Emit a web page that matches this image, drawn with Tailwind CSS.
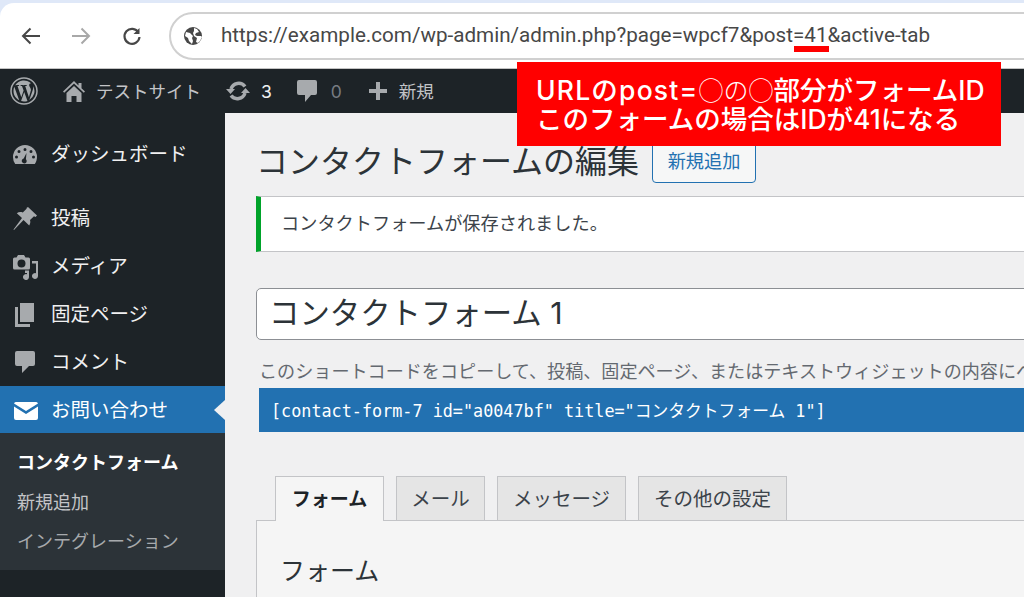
<!DOCTYPE html>
<html lang="ja">
<head>
<meta charset="UTF-8">
<title>コンタクトフォームの編集</title>
<script src="https://cdn.jsdelivr.net/npm/@tailwindcss/browser@4"></script>
</head>
<body class="font-['Inter','Noto_Sans_CJK_JP',sans-serif] bg-[#f0f0f1]">
<div class="relative w-[1024px] h-[597px] overflow-hidden flex flex-col">

    <!-- browser toolbar -->
    <div class="h-[69px] shrink-0 bg-[#dfe8f8] pt-[3px]">
        <div class="h-[66px] bg-white rounded-tl-[14px] border-b border-[#c4c4c4] flex items-center pl-[20px]">
            <svg class="w-[22px] h-[22px] shrink-0 text-[#474747]" viewBox="0 0 22 22" fill="none" stroke="currentColor" stroke-width="2"><path d="M20 11H3.500M10.500 3.500L3 11l7.500 7.500"/></svg>
            <svg class="w-[22px] h-[22px] shrink-0 ml-[28px] text-[#a8a8a8]" viewBox="0 0 22 22" fill="none" stroke="currentColor" stroke-width="2"><path d="M2 11h16.500M11.500 3.500L19 11l-7.500 7.500"/></svg>
            <svg class="w-[22px] h-[22px] shrink-0 ml-[29px] text-[#474747]" viewBox="0 0 22 22" fill="none" stroke="currentColor" stroke-width="2.200"><path d="M17.500 7.500A7.500 7.500 0 1 0 18.500 12"/><path d="M18.500 3v6h-6" fill="currentColor" stroke="none"/></svg>
            <div class="ml-[26px] w-[900px] h-[48px] shrink-0 rounded-l-[24px] border-2 border-[#d0d0d0] bg-white flex items-center pl-[12px]">
                <svg class="w-[20px] h-[20px] text-[#474747] shrink-0" viewBox="0 0 20 20"><circle cx="10" cy="10" r="9" fill="currentColor"/><path d="M3 6l4 1 3 3-1 2 1 3-1 3-3-3-1-3-3-2zM11 2l3 1 2 3-3 1-1 2 2 1h4l1 1-2 4-2 2-2-1 1-4-3-2-1-3 1-2z" fill="#fff"/></svg>
                <span class="ml-[18px] text-[20.630px] text-[#474747] font-['Roboto',sans-serif] whitespace-nowrap">https://example.com/wp-admin/admin.php?page=wpcf7&amp;post=41&amp;active-tab</span>
            </div>
        </div>
    </div>

    <!-- admin bar -->
    <div class="h-[44px] shrink-0 bg-[#1d2327] flex items-center text-[#c3c4c7] text-[17.500px]">
        <svg class="ml-[10px] w-[28px] h-[28px] shrink-0 text-[#a7aaad]" viewBox="0 0 28 28"><circle cx="14" cy="14" r="13" fill="none" stroke="currentColor" stroke-width="1.500"/><path fill="currentColor" d="M3.500 14c0 4 2.300 7.500 5.700 9.200L4.300 9.700A10.400 10.400 0 0 0 3.500 14zM21 13.500c0-1.300-.5-2.200-.9-2.900-.5-.9-1-1.600-1-2.500 0-1 .8-1.900 1.900-1.900h.1A10.500 10.500 0 0 0 5.200 8.200h.7c1.100 0 2.800-.1 2.800-.1.600 0 .6.800 0 .9 0 0-.6.100-1.200.1l3.800 11.200 2.300-6.800-1.600-4.400c-.6 0-1.100-.1-1.100-.1-.6 0-.5-.9 0-.9 0 0 1.700.1 2.700.1s2.800-.1 2.800-.1c.6 0 .6.800 0 .9 0 0-.6.100-1.200.1l3.700 11.100 1-3.400c.5-1.300.8-2.300.8-3.100zM14.200 15l-3.100 9.100a10.500 10.500 0 0 0 6.400-.2l-.1-.1zM23.200 9c0 .3.100.7.100 1.100 0 1-.2 2.200-.8 3.700l-3.200 9.200A10.500 10.500 0 0 0 23.200 9z"/></svg>
        <svg class="ml-[25px] w-[22px] h-[22px] shrink-0 text-[#a7aaad]" viewBox="0 0 22 22"><path fill="currentColor" d="M11 1L0 11.500l1.200 1.300L11 3.500l9.800 9.300 1.200-1.300-3.500-3.300V3h-3v2.500zM3.500 13L11 6l7.500 7v9h-5v-6h-5v6h-5z"/></svg>
        <span class="ml-[11px] mt-[2px] whitespace-nowrap">テストサイト</span>
        <svg class="ml-[25px] w-[24px] h-[24px] shrink-0 text-[#a7aaad]" viewBox="0 0 24 24" fill="none" stroke="currentColor" stroke-width="3.500"><path d="M5 10a8 8 0 0 1 14-2.500M19 14a8 8 0 0 1-14 2.500"/><path fill="currentColor" stroke="none" d="M0 10h9l-4.500 5zM24 14h-9l4.500-5z"/></svg>
        <span class="ml-[11px] mt-[2px] text-[#f0f0f1]">3</span>
        <svg class="ml-[25px] w-[20px] h-[24px] shrink-0 text-[#a7aaad]" viewBox="0 0 20 24"><path fill="currentColor" d="M2 1h16a2 2 0 0 1 2 2v11a2 2 0 0 1-2 2h-4l-6 7v-7H2a2 2 0 0 1-2-2V3a2 2 0 0 1 2-2z"/></svg>
        <span class="ml-[14px] mt-[2px] text-[#787c82]">0</span>
        <svg class="ml-[27px] w-[18px] h-[18px] shrink-0 text-[#a7aaad]" viewBox="0 0 18 18"><path fill="currentColor" d="M7 0h4v7h7v4h-7v7H7v-7H0V7h7z"/></svg>
        <span class="ml-[12px] mt-[2px] whitespace-nowrap">新規</span>
    </div>

    <div class="flex flex-1 min-h-0">
        <!-- sidebar -->
        <div class="w-[225px] shrink-0 bg-[#1d2327] pt-[18px] text-[#f0f0f1] text-[19.500px]">
            <div class="h-[48px] flex items-center pl-[13px]">
                <svg class="w-[24px] h-[20px] shrink-0 text-[#a7aaad]" viewBox="0 0 24 20"><path fill="currentColor" fill-rule="evenodd" d="M12 0a12 12 0 0 1 12 12c0 2.500-.8 5-2.200 7H2.200A12 12 0 0 1 0 12 12 12 0 0 1 12 0zM12 3a1.500 1.500 0 1 0 0 3 1.500 1.500 0 0 0 0-3zM6 5a1.500 1.500 0 1 0 0 3 1.500 1.500 0 0 0 0-3zM18 5a1.500 1.500 0 1 0 0 3 1.500 1.500 0 0 0 0-3zM3.500 10.500a1.500 1.500 0 1 0 0 3 1.500 1.500 0 0 0 0-3zM20.500 10.500a1.500 1.500 0 1 0 0 3 1.500 1.500 0 0 0 0-3zM13.500 8l-2.800 5.500a2.500 2.500 0 1 0 2.600 3.900c.6-1 .5-2.300-.4-3.200z"/></svg>
                <span class="ml-[14px] whitespace-nowrap">ダッシュボード</span>
            </div>
            <div class="h-[48px] mt-[16px] flex items-center pl-[13px]">
                <svg class="w-[24px] h-[24px] shrink-0 text-[#a7aaad]" viewBox="0 0 24 24"><path fill="currentColor" d="M15 0l9 8.500-1.500 1.500-1.500-.7-4 3.700c.7 2.200.2 4-.8 5.500L10.500 13 1 23l-.5-.5L9 11 3.800 6.200C5.500 5 7.500 4.600 9.800 5.500l4-4-.4-.5z"/></svg>
                <span class="ml-[14px] whitespace-nowrap">投稿</span>
            </div>
            <div class="h-[48px] flex items-center pl-[13px]">
                <svg class="w-[25px] h-[25px] shrink-0 text-[#a7aaad]" viewBox="0 0 25 25"><path fill="currentColor" fill-rule="evenodd" d="M5 0h6l1.500 2.500h3A1.500 1.500 0 0 1 17 4v9a1.500 1.500 0 0 1-1.500 1.500h-14A1.500 1.500 0 0 1 0 13V4a1.500 1.500 0 0 1 1.500-1.500h2zM8.500 4.500a4 4 0 1 0 0 8 4 4 0 0 0 0-8zM19 6h6v15a3 3 0 1 1-2-2.800V8.500h-4zM12 15.500h4V22a3 3 0 1 1-2-2.800v-1.200h-2z"/></svg>
                <span class="ml-[13px] whitespace-nowrap">メディア</span>
            </div>
            <div class="h-[48px] flex items-center pl-[15px]">
                <svg class="w-[20px] h-[24px] shrink-0 text-[#a7aaad]" viewBox="0 0 20 24"><path fill="currentColor" d="M5 0h14v19H5zM0 4h3v17h12v3H0z"/></svg>
                <span class="ml-[16px] whitespace-nowrap">固定ページ</span>
            </div>
            <div class="h-[47px] flex items-center pl-[15px]">
                <svg class="w-[20px] h-[23px] shrink-0 text-[#a7aaad]" viewBox="0 0 20 23"><path fill="currentColor" d="M2 0h16a2 2 0 0 1 2 2v11a2 2 0 0 1-2 2h-4l-7 7v-7H2a2 2 0 0 1-2-2V2a2 2 0 0 1 2-2z"/></svg>
                <span class="ml-[16px] whitespace-nowrap">コメント</span>
            </div>
            <div class="h-[47px] bg-[#2271b1] flex items-center pl-[14px] pt-[2px] text-white relative">
                <svg class="w-[24px] h-[18px] shrink-0" viewBox="0 0 24 18"><path fill="#fff" d="M2 0h20a2 2 0 0 1 2 1.500L12 9 0 1.500A2 2 0 0 1 2 0zM0 4.500V16a2 2 0 0 0 2 2h20a2 2 0 0 0 2-2V4.500L12 12z"/></svg>
                <span class="ml-[13px] whitespace-nowrap">お問い合わせ</span>
                <div class="absolute right-0 top-[14px] w-0 h-0 border-y-[10px] border-y-transparent border-r-[11px] border-r-[#f0f0f1]"></div>
            </div>
            <div class="h-[137px] bg-[#2c3338] pt-[9px] text-[18px]">
                <div class="h-[40px] flex items-center pl-[17px] font-bold text-white whitespace-nowrap">コンタクトフォーム</div>
                <div class="h-[40px] flex items-center pl-[17px] text-[#c3c4c7] whitespace-nowrap">新規追加</div>
                <div class="h-[39px] flex items-center pl-[17px] text-[#a7aaad] whitespace-nowrap">インテグレーション</div>
            </div>
        </div>

        <!-- main content -->
        <div class="flex-1 min-w-0 pl-[31px] pt-[28px] text-[#1d2327]">
            <div class="flex items-center h-[42px] whitespace-nowrap">
                <h1 class="text-[32px] text-[#2c3338] leading-none">コンタクトフォームの編集</h1>
                <div class="ml-[13px] w-[104px] h-[42px] rounded-[4px] border border-[#2271b1] bg-[#f6f7f7] text-[#2271b1] text-[18.200px] flex items-center justify-center">新規追加</div>
            </div>
            <div class="mt-[13px] w-[800px] h-[56px] bg-white border border-[#c3c4c7] border-l-[5px] border-l-[#00a32a] flex items-center pl-[20px] text-[18.200px] text-[#3c434a] whitespace-nowrap">コンタクトフォームが保存されました。</div>
            <div class="mt-[36px] w-[800px] h-[52px] bg-white border border-[#8c8f94] rounded-l-[5px] flex items-center pl-[12px] text-[30.400px] text-[#2c3338] whitespace-nowrap">コンタクトフォーム 1</div>
            <p class="mt-[20px] ml-[3px] h-[22px] text-[18.100px] leading-[22px] text-[#646970] whitespace-nowrap">このショートコードをコピーして、投稿、固定ページ、またはテキストウィジェットの内容にペ</p>
            <div class="mt-[6px] ml-[3px] w-[800px] h-[44px] bg-[#2271b1] text-white flex items-center pl-[12px] pt-[3px] text-[16.800px] font-['DejaVu_Sans_Mono','Noto_Sans_CJK_JP',monospace] whitespace-nowrap">[contact-form-7 id="a0047bf" title="コンタクトフォーム 1"]</div>

            <div class="mt-[44px] pl-[19px] flex items-start gap-[12px] h-[44px] text-[19.500px] relative z-10 whitespace-nowrap">
                <div class="w-[109px] h-[45px] pt-[3px] bg-[#f5f5f5] border border-[#c3c4c7] border-b-0 flex items-center justify-center text-[19px] font-bold text-[#1d2327]">フォーム</div>
                <div class="w-[89px] h-[44px] pt-[3px] bg-[#e5e5e5] border border-[#c3c4c7] border-b-0 flex items-center justify-center text-[#3c434a]">メール</div>
                <div class="w-[129px] h-[44px] pt-[3px] bg-[#e5e5e5] border border-[#c3c4c7] border-b-0 flex items-center justify-center text-[#3c434a]">メッセージ</div>
                <div class="w-[149px] h-[44px] pt-[3px] bg-[#e5e5e5] border border-[#c3c4c7] border-b-0 flex items-center justify-center text-[#3c434a]">その他の設定</div>
            </div>
            <div class="w-[800px] h-[100px] bg-[#f5f5f5] border border-[#c3c4c7] pl-[23px] pt-[32px] text-[25px] leading-[36px] text-[#2c3338]">フォーム</div>
        </div>
    </div>

    <!-- annotation over the screenshot -->
    <div class="absolute left-[794px] top-[46px] w-[35px] h-[6px] bg-[#ff0000]"></div>
    <div class="absolute left-[517px] top-[62px] w-[484px] h-[84px] bg-[#ff0000] text-white text-[26.500px] leading-[30px] font-medium pl-[19px] pt-[12px] whitespace-nowrap">
        <div class="h-[30px]"><span class="tracking-[1.200px]">URLのpost=</span><span class="font-['Noto_Sans_CJK_JP',sans-serif] font-light text-[25px]">◯の◯</span>部分がフォームID</div>
        <div class="h-[30px]">このフォームの場合はIDが41になる</div>
    </div>
</div>
</body>
</html>
